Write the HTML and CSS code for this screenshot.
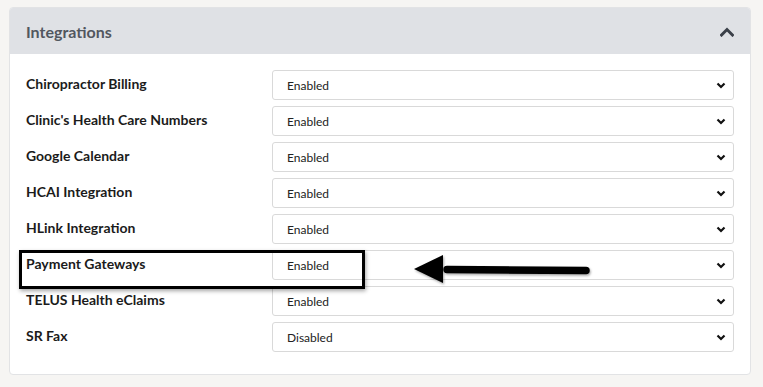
FILE: index.html
```html
<html>
    <head>
        <title>Integrations</title>
        <meta name="viewport" content="width=device-width, initial-scale=1.0">
        <link rel="stylesheet" href="styles.css">
    </head>
    <body>
        <div class="card">
            <div class="card-header">
                <h3>Integrations</h3>
                <!-- collapse toggle -->
                <svg class="toggle" width="14" height="10" viewBox="0 0 14 10">
                    <path d="M1.5 8 L7 2.5 L12.5 8" fill="none" stroke="#3b4049" stroke-width="3" stroke-linecap="square"/>
                </svg>
            </div>
            <div class="card-body">
                <div class="row">
                    <label for="chiro">Chiropractor Billing</label>
                    <div class="select-wrap">
                        <select id="chiro"><option>Enabled</option><option>Disabled</option></select>
                        <svg class="caret" width="10" height="7" viewBox="0 0 10 7"><path d="M1.5 1.5 L5 5 L8.5 1.5" fill="none" stroke="#111" stroke-width="2.2"/></svg>
                    </div>
                </div>
                <div class="row">
                    <label for="hcn">Clinic's Health Care Numbers</label>
                    <div class="select-wrap">
                        <select id="hcn"><option>Enabled</option><option>Disabled</option></select>
                        <svg class="caret" width="10" height="7" viewBox="0 0 10 7"><path d="M1.5 1.5 L5 5 L8.5 1.5" fill="none" stroke="#111" stroke-width="2.2"/></svg>
                    </div>
                </div>
                <div class="row">
                    <label for="gcal">Google Calendar</label>
                    <div class="select-wrap">
                        <select id="gcal"><option>Enabled</option><option>Disabled</option></select>
                        <svg class="caret" width="10" height="7" viewBox="0 0 10 7"><path d="M1.5 1.5 L5 5 L8.5 1.5" fill="none" stroke="#111" stroke-width="2.2"/></svg>
                    </div>
                </div>
                <div class="row">
                    <label for="hcai">HCAI Integration</label>
                    <div class="select-wrap">
                        <select id="hcai"><option>Enabled</option><option>Disabled</option></select>
                        <svg class="caret" width="10" height="7" viewBox="0 0 10 7"><path d="M1.5 1.5 L5 5 L8.5 1.5" fill="none" stroke="#111" stroke-width="2.2"/></svg>
                    </div>
                </div>
                <div class="row">
                    <label for="hlink">HLink Integration</label>
                    <div class="select-wrap">
                        <select id="hlink"><option>Enabled</option><option>Disabled</option></select>
                        <svg class="caret" width="10" height="7" viewBox="0 0 10 7"><path d="M1.5 1.5 L5 5 L8.5 1.5" fill="none" stroke="#111" stroke-width="2.2"/></svg>
                    </div>
                </div>
                <div class="row">
                    <label for="pay">Payment Gateways</label>
                    <div class="select-wrap">
                        <select id="pay"><option>Enabled</option><option>Disabled</option></select>
                        <svg class="caret" width="10" height="7" viewBox="0 0 10 7"><path d="M1.5 1.5 L5 5 L8.5 1.5" fill="none" stroke="#111" stroke-width="2.2"/></svg>
                    </div>
                </div>
                <div class="row">
                    <label for="telus">TELUS Health eClaims</label>
                    <div class="select-wrap">
                        <select id="telus"><option>Enabled</option><option>Disabled</option></select>
                        <svg class="caret" width="10" height="7" viewBox="0 0 10 7"><path d="M1.5 1.5 L5 5 L8.5 1.5" fill="none" stroke="#111" stroke-width="2.2"/></svg>
                    </div>
                </div>
                <div class="row">
                    <label for="srfax">SR Fax</label>
                    <div class="select-wrap">
                        <select id="srfax"><option>Disabled</option><option>Enabled</option></select>
                        <svg class="caret" width="10" height="7" viewBox="0 0 10 7"><path d="M1.5 1.5 L5 5 L8.5 1.5" fill="none" stroke="#111" stroke-width="2.2"/></svg>
                    </div>
                </div>
            </div>

            <!-- annotation drawn over the form -->
            <div class="highlight"></div>
            <svg class="pointer" width="184" height="40" viewBox="0 0 184 40">
                <defs>
                    <filter id="shade" x="-10%" y="-30%" width="120%" height="160%">
                        <feDropShadow dx="1" dy="1.5" stdDeviation="1.2" flood-color="#000" flood-opacity="0.35"/>
                    </filter>
                </defs>
                <g filter="url(#shade)">
                    <path d="M36 21.5 L175 22.5" stroke="#000" stroke-width="7.5" stroke-linecap="round"/>
                    <path d="M3 21 L32 7 L32 35 Z" fill="#000"/>
                </g>
            </svg>
        </div>
    </body>
</html>
```

FILE: styles.css
```css
body {
    margin: 0;
    padding: 7px 12px 13px 9px;
    background-color: #f6f5f3;
    font-family: Lato, 'Liberation Sans', Arial, sans-serif;
}
.card {
    position: relative;
    width: 740px;
    background-color: #fff;
    border: 1px solid #e2e3e5;
    border-radius: 4px;
    overflow: hidden;
}
.card-header {
    display: flex;
    align-items: center;
    justify-content: space-between;
    height: 46px;
    padding: 0 16px 0 16px;
    background-color: #dfe1e5;
}
.card-header h3 {
    margin: 0;
    font-size: 16px;
    font-weight: 700;
    color: #52575f;
}
.toggle {
    display: block;
    margin-top: 1px;
}
.card-body {
    display: flex;
    flex-direction: column;
    gap: 6px;
    padding: 16px 16px 22px 16px;
}
.row {
    display: flex;
    align-items: flex-start;
}
.row label {
    width: 246px;
    padding-top: 5px;
    font-size: 14px;
    font-weight: 700;
    color: #1b1b1b;
}
.select-wrap {
    position: relative;
    flex: 1;
}
.select-wrap select {
    display: block;
    width: 100%;
    height: 30px;
    padding: 0 30px 0 14px;
    border: 1px solid #d9d9d9;
    border-radius: 3px;
    background-color: #fff;
    font-family: Lato, 'Liberation Sans', Arial, sans-serif;
    font-size: 12px;
    color: #222;
    -webkit-appearance: none;
    appearance: none;
}
.caret {
    position: absolute;
    right: 8px;
    top: 12px;
}
.highlight {
    position: absolute;
    left: 9px;
    top: 242px;
    width: 340px;
    height: 33px;
    border: 3px solid #000;
    box-shadow: 1px 2px 4px rgba(0, 0, 0, 0.35);
}
.pointer {
    position: absolute;
    left: 401px;
    top: 240px;
}
```
